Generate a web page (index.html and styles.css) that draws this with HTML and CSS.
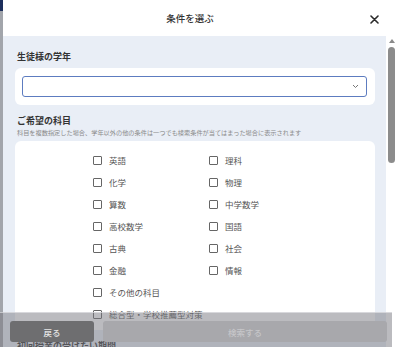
FILE: index.html
```html
<!DOCTYPE html>
<html lang="ja">

<head>
    <meta charset="UTF-8">
    <meta name="viewport" content="width=device-width, initial-scale=1.0">
    <title>条件を選ぶ</title>
    <link rel="stylesheet" href="styles.css">
</head>

<body>
    <div class="backdrop"></div>
    <div class="modal">
        <div class="modal-head">
            <div class="modal-title">条件を選ぶ</div>
            <a class="close" href="javascript:;">
                <svg width="9" height="9" viewBox="0 0 9 9">
                    <path d="M1 1L8 8M8 1L1 8" stroke="#2b2b2b" stroke-width="1.6" stroke-linecap="round" />
                </svg>
            </a>
        </div>
        <div class="modal-body">
            <div class="content">
                <div class="label">生徒様の学年</div>
                <div class="card card-select">
                    <div class="select">
                        <svg width="7" height="5" viewBox="0 0 7 5">
                            <path d="M1 1L3.5 3.5L6 1" fill="none" stroke="#777" stroke-width="1" />
                        </svg>
                    </div>
                </div>

                <div class="label label-gap">ご希望の科目</div>
                <div class="note">科目を複数指定した場合、学年以外の他の条件は一つでも検索条件が当てはまった場合に表示されます</div>
                <div class="card card-list">
                    <ul class="subjects">
                        <li><span class="box"></span>英語</li>
                        <li><span class="box"></span>理科</li>
                        <li><span class="box"></span>化学</li>
                        <li><span class="box"></span>物理</li>
                        <li><span class="box"></span>算数</li>
                        <li><span class="box"></span>中学数学</li>
                        <li><span class="box"></span>高校数学</li>
                        <li><span class="box"></span>国語</li>
                        <li><span class="box"></span>古典</li>
                        <li><span class="box"></span>社会</li>
                        <li><span class="box"></span>金融</li>
                        <li><span class="box"></span>情報</li>
                        <li class="wide"><span class="box"></span>その他の科目</li>
                        <li class="wide"><span class="box"></span>総合型・学校推薦型対策</li>
                    </ul>
                </div>

                <div class="label label-gap">初回授業の受けたい期間</div>
            </div>
            <div class="scrollbar">
                <div class="arrow-up"></div>
                <div class="thumb"></div>
            </div>
        </div>
    </div>
    <div class="footer">
        <a class="btn btn-back" href="javascript:;">戻る</a>
        <a class="btn btn-search" href="javascript:;">検索する</a>
    </div>
</body>

</html>
```

FILE: styles.css
```css
body {
    margin: 0;
    display: flex;
    height: 347px;
    overflow: hidden;
    font-family: "Noto Sans CJK JP", "Noto Sans", sans-serif;
    color: #333;
}

ul {
    list-style: none;
    margin: 0;
    padding: 0;
}

a {
    text-decoration: none;
}

.backdrop {
    width: 3px;
    background: linear-gradient(#1d2f5c 0, #1d2f5c 11px, #a2a5ab 11px);
}

.modal {
    flex: 1;
    display: flex;
    flex-direction: column;
    background-color: #fff;
}

.modal-head {
    display: flex;
    align-items: center;
    height: 36px;
    padding: 0 21px 0 7px;
}

.modal-title {
    flex: 1;
    text-align: center;
    font-size: 9.5px;
    font-weight: 500;
    color: #333;
}

.close {
    display: flex;
    width: 9px;
    height: 9px;
    margin-top: 2px;
}

.modal-body {
    flex: 1;
    display: flex;
    padding-right: 3px;
    min-height: 0;
}

.content {
    flex: 1;
    padding: 14px 11px 0 12px;
    background-color: #e9eef6;
}

.label {
    font-size: 9px;
    font-weight: bold;
    line-height: 14px;
    color: #333;
    padding-left: 2px;
}

.label-gap {
    margin-top: 9px;
}

.note {
    font-size: 6.2px;
    line-height: 9px;
    color: #8a8a8a;
    padding-left: 2px;
    white-space: nowrap;
}

.card {
    margin-top: 4px;
    background-color: #fff;
    border-radius: 6px;
}

.card-select {
    padding: 8px 8px 8px 7px;
}

.select {
    display: flex;
    align-items: center;
    justify-content: flex-end;
    height: 19px;
    padding-right: 7px;
    border: 1px solid #5d7cc0;
    border-radius: 3px;
}

.card-list {
    padding: 8px 0 5px 78px;
}

.subjects {
    display: grid;
    grid-template-columns: 116px 116px;
}

.subjects li {
    display: flex;
    align-items: center;
    height: 22px;
    font-size: 8.5px;
    color: #555;
}

.subjects .wide {
    grid-column: 1 / 3;
}

.box {
    width: 7px;
    height: 7px;
    margin-right: 7px;
    border: 1.3px solid #666;
    border-radius: 1px;
}

.scrollbar {
    display: flex;
    flex-direction: column;
    align-items: center;
    width: 11px;
    padding-top: 3px;
    background-color: #fff;
}

.arrow-up {
    width: 0;
    height: 0;
    border-left: 3px solid transparent;
    border-right: 3px solid transparent;
    border-bottom: 4px solid #8a8a8a;
}

.thumb {
    width: 7px;
    height: 116px;
    margin-top: 4px;
    border-radius: 4px;
    background-color: #8c8c8c;
}

.footer {
    position: fixed;
    left: 0;
    bottom: 0;
    width: 392px;
    height: 35px;
    display: flex;
    gap: 9px;
    padding: 8px 5px 0 10px;
    box-sizing: border-box;
    background-color: rgba(120, 120, 128, 0.5);
    border-top: 1px solid rgba(235, 235, 240, 0.6);
}

.btn {
    display: flex;
    align-items: center;
    justify-content: center;
    height: 21px;
    border-radius: 3px;
    font-size: 8.5px;
    font-weight: 500;
}

.btn-back {
    width: 84px;
    background-color: #6e6e70;
    color: #e6e6e6;
}

.btn-search {
    width: 284px;
    background-color: #a8a8ac;
    color: #c6c6c9;
}
```
